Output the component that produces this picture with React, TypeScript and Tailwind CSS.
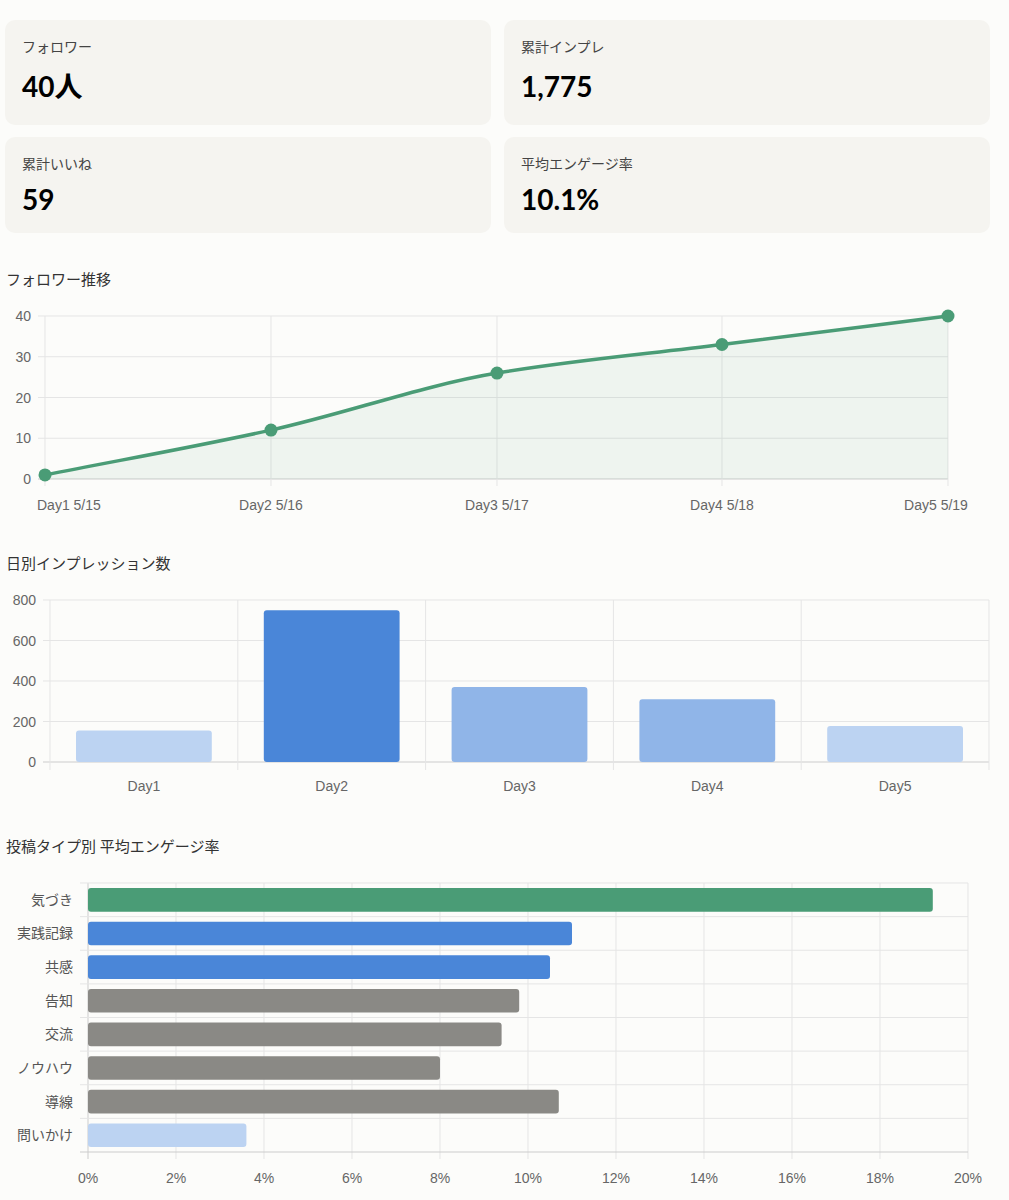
import React from "react";

const font = { fontFamily: "Lato, 'Noto Sans CJK JP', sans-serif" };
const axisFont = "'Liberation Sans', 'Noto Sans CJK JP', sans-serif";

const cards = [
  { label: "フォロワー", value: "40人" },
  { label: "累計インプレ", value: "1,775" },
  { label: "累計いいね", value: "59" },
  { label: "平均エンゲージ率", value: "10.1%" },
];

// monotone cubic path
function monotone(pts: [number, number][]) {
  const n = pts.length;
  const d: number[] = [];
  const m: number[] = [];
  for (let i = 0; i < n - 1; i++) d.push((pts[i + 1][1] - pts[i][1]) / (pts[i + 1][0] - pts[i][0]));
  m.push(d[0]);
  for (let i = 1; i < n - 1; i++) m.push(d[i - 1] * d[i] <= 0 ? 0 : (2 * d[i - 1] * d[i]) / (d[i - 1] + d[i]));
  m.push(d[n - 2]);
  let p = `M${pts[0][0]},${pts[0][1]}`;
  for (let i = 0; i < n - 1; i++) {
    const h = (pts[i + 1][0] - pts[i][0]) / 3;
    p += ` C${pts[i][0] + h},${pts[i][1] + m[i] * h} ${pts[i + 1][0] - h},${pts[i + 1][1] - m[i + 1] * h} ${pts[i + 1][0]},${pts[i + 1][1]}`;
  }
  return p;
}

function LineChart() {
  const xs = [45, 271, 497, 722, 948];
  const vals = [1, 12, 26, 33, 40];
  const y = (v: number) => 479 - (v / 40) * 163;
  const pts = xs.map((x, i) => [x, y(vals[i])] as [number, number]);
  const path = monotone(pts);
  const labels = ["Day1 5/15", "Day2 5/16", "Day3 5/17", "Day4 5/18", "Day5 5/19"];
  return (
    <svg width="1009" height="224" viewBox="0 296 1009 224" className="block mt-[6px]">
      {[0, 10, 20, 30, 40].map((v) => (
        <g key={v}>
          <line x1={38} x2={948} y1={y(v)} y2={y(v)} stroke={v === 0 ? "#ccc" : "#e5e5e5"} />
          <text x={31} y={y(v) + 5} textAnchor="end" fontSize="14" fill="#666" fontFamily={axisFont}>{v}</text>
        </g>
      ))}
      {xs.map((x) => (
        <line key={x} x1={x} x2={x} y1={316} y2={486} stroke="#e5e5e5" />
      ))}
      <path d={`${path} L948,479 L45,479 Z`} fill="#4a9c76" fillOpacity="0.08" />
      <path d={path} fill="none" stroke="#4a9c76" strokeWidth="3.5" />
      {pts.map(([px, py], i) => (
        <circle key={i} cx={px} cy={py} r="6.5" fill="#4a9c76" />
      ))}
      {labels.map((l, i) => (
        <text key={l} x={xs[i] + (i === 0 ? -8 : i === 4 ? -12 : 0)} y={510} textAnchor={i === 0 ? "start" : i === 4 ? "middle" : "middle"} fontSize="14" fill="#666" fontFamily={axisFont}>{l}</text>
      ))}
    </svg>
  );
}

function BarChart() {
  const y = (v: number) => 762 - (v / 800) * 162;
  const vals = [155, 750, 370, 310, 178];
  const colors = ["#bcd3f2", "#4a86d8", "#90b5e8", "#90b5e8", "#bcd3f2"];
  const w = 939 / 5;
  return (
    <svg width="1009" height="220" viewBox="0 580 1009 220" className="block mt-[6px]">
      {[0, 200, 400, 600, 800].map((v) => (
        <g key={v}>
          <line x1={43} x2={989} y1={y(v)} y2={y(v)} stroke={v === 0 ? "#ccc" : "#e5e5e5"} />
          <text x={36} y={y(v) + 5} textAnchor="end" fontSize="14" fill="#666" fontFamily={axisFont}>{v}</text>
        </g>
      ))}
      {[0, 1, 2, 3, 4, 5].map((i) => (
        <line key={i} x1={50 + i * w} x2={50 + i * w} y1={600} y2={770} stroke="#e5e5e5" />
      ))}
      {vals.map((v, i) => (
        <g key={i}>
          <rect x={50 + i * w + 26} y={y(v)} width={w - 52} height={762 - y(v)} rx="3" fill={colors[i]} />
          <text x={50 + i * w + w / 2} y={791} textAnchor="middle" fontSize="14" fill="#666" fontFamily={axisFont}>Day{i + 1}</text>
        </g>
      ))}
    </svg>
  );
}

function HBarChart() {
  const rows: [string, number, string][] = [
    ["気づき", 19.2, "#4a9c76"],
    ["実践記録", 11.0, "#4a86d8"],
    ["共感", 10.5, "#4a86d8"],
    ["告知", 9.8, "#8a8985"],
    ["交流", 9.4, "#8a8985"],
    ["ノウハウ", 8.0, "#8a8985"],
    ["導線", 10.7, "#8a8985"],
    ["問いかけ", 3.6, "#bcd3f2"],
  ];
  const x = (v: number) => 88 + (v / 20) * 880;
  const rh = 269 / 8;
  return (
    <svg width="1009" height="336" viewBox="0 864 1009 336" className="block mt-[7px]">
      {Array.from({ length: 11 }, (_, i) => i * 2).map((v) => (
        <g key={v}>
          <line x1={x(v)} x2={x(v)} y1={883} y2={1159} stroke={v === 0 ? "#ccc" : "#e5e5e5"} />
          <text x={x(v)} y={1183} textAnchor="middle" fontSize="14" fill="#666" fontFamily={axisFont}>{v}%</text>
        </g>
      ))}
      {Array.from({ length: 9 }, (_, i) => i).map((i) => (
        <line key={i} x1={80} x2={968} y1={883 + i * rh} y2={883 + i * rh} stroke={i === 8 ? "#ccc" : "#e5e5e5"} />
      ))}
      {rows.map(([l, v, c], i) => (
        <g key={l}>
          <rect x={88} y={883 + i * rh + 5} width={x(v) - 88} height={rh - 10} rx="3" fill={c} />
          <text x={73} y={883 + i * rh + rh / 2 + 5} textAnchor="end" fontSize="14" fill="#555" fontFamily={axisFont}>{l}</text>
        </g>
      ))}
    </svg>
  );
}

export default function App() {
  return (
    <div className="w-[1009px] h-[1200px] bg-[#fcfcfa] overflow-hidden" style={font}>
      <div className="grid grid-cols-2 gap-x-[13px] gap-y-[12px] px-[5px] pt-[20px] pr-[19px]">
        {cards.map((c, i) => (
          <div key={c.label} className={`bg-[#f5f4f0] rounded-[10px] px-[17px] pt-[17px] ${i < 2 ? "h-[105px]" : "h-[96px]"}`}>
            <div className="text-[14px] text-[#444] leading-[20px]">{c.label}</div>
            <div className={`text-[28px] font-bold text-black leading-[36px] ${i < 2 ? "mt-[11px]" : "mt-[7px]"}`}>{c.value}</div>
          </div>
        ))}
      </div>
      <div className="mt-[35px] h-[22px] leading-[22px] px-[6px] text-[15px] text-[#333]">フォロワー推移</div>
      <LineChart />
      <div className="mt-[32px] h-[22px] leading-[22px] px-[6px] text-[15px] text-[#333]">日別インプレッション数</div>
      <BarChart />
      <div className="mt-[35px] h-[22px] leading-[22px] px-[6px] text-[15px] text-[#333]">投稿タイプ別 平均エンゲージ率</div>
      <HBarChart />
    </div>
  );
}
